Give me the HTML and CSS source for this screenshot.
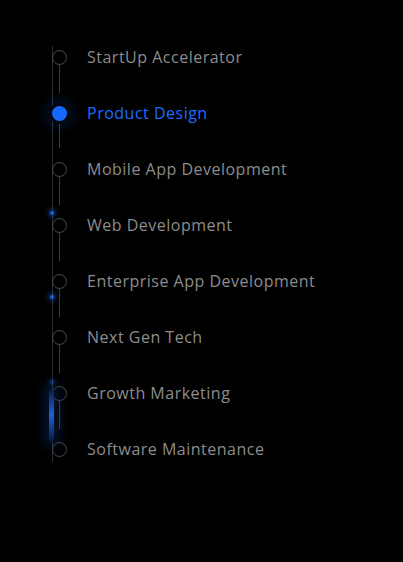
FILE: index.html
```html
<!DOCTYPE html>
<html lang="en">
<head>
	<meta charset="UTF-8">
	<title>Services</title>
	<link rel="stylesheet" href="styles.css">
</head>
<body>
	<div class="page">
		<ul class="timeline">
			<li class="item"><span class="mark"></span><span class="label">StartUp Accelerator</span></li>
			<li class="item active"><span class="mark"></span><span class="label">Product Design</span></li>
			<li class="item"><span class="mark"></span><span class="label">Mobile App Development</span></li>
			<li class="item"><span class="mark"></span><span class="label">Web Development</span></li>
			<li class="item"><span class="mark"></span><span class="label">Enterprise App Development</span></li>
			<li class="item"><span class="mark"></span><span class="label">Next Gen Tech</span></li>
			<li class="item"><span class="mark"></span><span class="label">Growth Marketing</span></li>
			<li class="item last"><span class="mark"></span><span class="label">Software Maintenance</span></li>
			<span class="spark s1"></span>
			<span class="spark s2"></span>
			<span class="spark s3"></span>
			<span class="spark trail"></span>
		</ul>
	</div>
</body>
</html>
```

FILE: styles.css
```css
*{
	margin: 0;
	padding: 0;
	box-sizing: border-box;
}
ul,li{
	list-style: none;
}
html,body{
	background: #000;
	height: 100%;
}
body{
	font-family: "Open Sans", "Liberation Sans", sans-serif;
}
.page{
	padding: 29px 0 0 52px;
}
.timeline{
	position: relative;
	display: flex;
	flex-direction: column;
}
.timeline::before{
	content: "";
	position: absolute;
	left: 0;
	top: 17px;
	bottom: 15px;
	width: 1px;
	background: #2e2e2e;
}
.item{
	height: 56px;
	display: flex;
	align-items: center;
	gap: 20px;
}
.mark{
	position: relative;
	width: 15px;
	height: 15px;
	border: 1px solid #4a4a4a;
	border-radius: 50%;
	flex-shrink: 0;
}
.mark::after{
	content: "";
	position: absolute;
	left: 6px;
	top: 14px;
	width: 1px;
	height: 28px;
	background: #3c3c3c;
}
.last .mark::after{
	display: none;
}
.label{
	font-size: 16px;
	color: #8c8c8c;
	letter-spacing: 0.5px;
}
.active .mark{
	border: none;
	background: #1468ff;
	box-shadow: 0 0 0 3px #04070d, 0 0 12px 6px rgba(20,90,220,0.22);
}
.active .mark::after{
	left: 7px;
	top: 18px;
	height: 24px;
}
.active .label{
	color: #1a6dff;
}
.spark{
	position: absolute;
	left: -2px;
	width: 4px;
	height: 4px;
	border-radius: 50%;
	background: #1b5fd0;
	box-shadow: 0 0 4px 2px rgba(27,95,208,0.5);
}
.s1{
	top: 182px;
}
.s2{
	top: 266px;
}
.s3{
	top: 351px;
	opacity: 0.5;
}
.trail{
	left: -3px;
	top: 360px;
	width: 5px;
	height: 52px;
	border-radius: 3px;
	background: linear-gradient(#071c44, #2460d0 50%, #071c44);
	box-shadow: 0 0 12px 5px rgba(20,70,170,0.3);
}
```
